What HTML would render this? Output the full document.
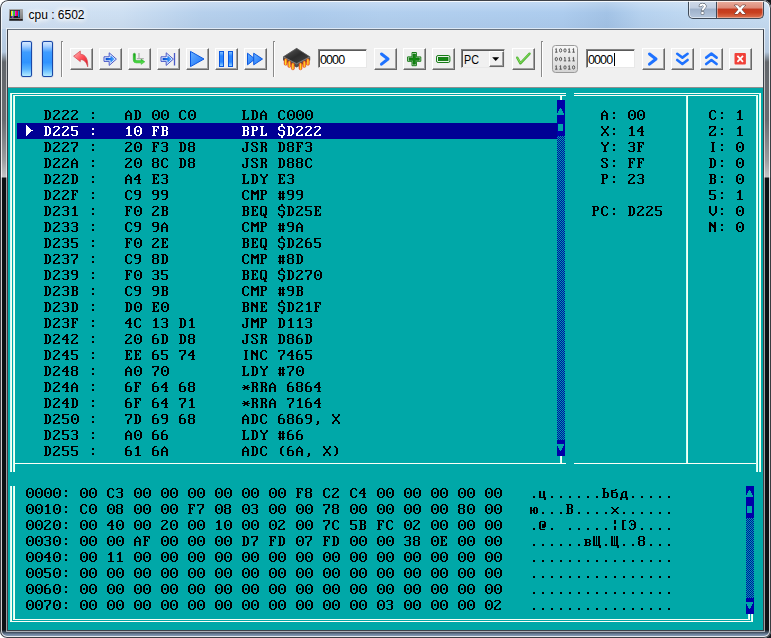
<!DOCTYPE html>
<html><head><meta charset="utf-8"><title>cpu : 6502</title>
<style>
html,body{margin:0;padding:0}
body{width:771px;height:638px;position:relative;overflow:hidden;background:#fff;font-family:"Liberation Sans",sans-serif}
.r{position:absolute}
.t{position:absolute;margin:0;font-family:"Liberation Mono",monospace;font-weight:bold;font-size:15px;line-height:16px;height:16px;color:#000;white-space:pre;letter-spacing:0}
.hatch{background-color:#0000a8;background-image:conic-gradient(#00a8a8 25%,#0000a8 0 50%,#00a8a8 0 75%,#0000a8 0);background-size:2px 2px}
#corner{position:absolute;left:760px;top:0;width:11px;height:10px;background:#15181c}
#win{position:absolute;left:0;top:0;width:771px;height:638px;border-radius:8px 8px 7px 7px;overflow:hidden;
 background:linear-gradient(180deg,#c9dbee 0,#bfd3e9 18px,#bcd1e8 30px,#b4c8de 52px,#63676c 62px,#686b70 120px,#9a9c9f 160px,#c4c5c7 177px,#0c1014 178px,#0c1014 630px,#2c3644 631px,#3a4656 632px,#506074 633px,#6a7e98 634px,#8096b0 635.5px,#8096b0 638px)}
#win:before{content:"";position:absolute;left:0;top:0;right:0;bottom:0;border-radius:8px 8px 7px 7px;box-shadow:inset 0 0 0 1px rgba(30,34,40,.85),inset 0 0 0 2px rgba(255,255,255,.8);z-index:5;pointer-events:none}
#inner{position:absolute;left:6px;top:28px;width:759px;height:604px;box-sizing:border-box;border:1px solid rgba(255,255,255,.6);}
#inner2{position:absolute;left:7px;top:29px;width:757px;height:602px;box-sizing:border-box;border:1px solid #3c4048;border-top-color:#6a7480}
#tool{position:absolute;left:8px;top:30px;width:755px;height:57px;background:#f0f0f0;border-bottom:1px solid #8f8f8f}
.btn{position:absolute;top:48px;width:21px;height:20px;background:#f0f0f0;border:1px solid;border-color:#fff #696969 #696969 #fff;border-width:1px 1px 1px 1px;box-shadow:inset -1px -1px 0 #a0a0a0;}
.sep{position:absolute;top:41px;width:1px;height:35px;background:#fff;border-left:1px solid #8a8a8a;border-top:1px solid #8a8a8a}
.inp{position:absolute;background:#fff;border:1px solid;border-color:#828282 #e8e8e8 #e8e8e8 #828282;box-shadow:inset 1px 1px 0 #5a5a5a;box-sizing:border-box;font-size:12.5px;line-height:21px;padding-left:1px;color:#000;letter-spacing:-0.9px;overflow:hidden}
.bar{position:absolute;top:41px;width:9px;height:34px;border:1px solid #1848a8;border-radius:2px;background:linear-gradient(180deg,#d4e8ff 0,#a8d0ff 12%,#3e9cff 30%,#2f93ff 60%,#5ab4ff 80%,#b4ecff 100%);box-shadow:0 0 1px #1848a8}
#title{position:absolute;left:28.5px;top:7px;font-size:12px;line-height:16px;color:#000;letter-spacing:0;text-shadow:0 0 6px #fff,0 0 6px #fff,0 0 4px #fff,0 0 8px #fff}
.cap{position:absolute;top:0;height:19px;box-sizing:border-box;border:1px solid #3f4a58;border-top:none}
</style></head><body>
<div id="corner"></div><div class="r" style="left:760px;top:628px;width:11px;height:10px;background:#15181c"></div>
<div id="win">
<div id="tb" class="r" style="left:2px;top:2px;width:767px;height:27px;background:linear-gradient(90deg,#d2e2f3 0,#cddff2 120px,#b6d0ec 200px,#adcbec 300px,#b2cfee 380px,#adccee 560px,#a3c3e6 605px,#b6d2ef 640px,#c2daf2 700px,#c6dcf1 767px)"></div><div class="r" style="left:2px;top:2px;width:767px;height:27px;background:linear-gradient(180deg,rgba(255,255,255,.25) 0,rgba(255,255,255,0) 40%,rgba(0,0,30,.03) 100%)"></div><div id="inner"></div><div id="inner2"></div>
<div id="title">cpu : 6502</div>
<!-- title icon -->
<svg class="r" style="left:9px;top:9px" width="15" height="12" viewBox="9 9 15 12">
<defs><linearGradient id="tvb" x1="0" y1="0" x2="0" y2="1"><stop offset="0" stop-color="#a8a8a8"/><stop offset="1" stop-color="#7c7c7c"/></linearGradient></defs>
<rect x="9" y="9.1" width="14" height="10" rx=".6" fill="url(#tvb)"/>
<rect x="10" y="10" width="10" height="8" fill="#2c2c30"/>
<rect x="11" y="10.8" width="1.1" height="5.4" fill="#ffe600"/><rect x="12.1" y="10.8" width="1.3" height="5.4" fill="#b8ecd8"/><rect x="13.4" y="10.8" width="1.5" height="5.4" fill="#2ce030"/><rect x="15" y="10.8" width="1.7" height="5.4" fill="#ff00e8"/><rect x="16.7" y="10.8" width="1.2" height="5.4" fill="#f01030"/><rect x="18.1" y="10.8" width="1.2" height="6.4" fill="#1088f0"/>
<rect x="11" y="16.2" width="1.1" height="1.2" fill="#2040c0"/><rect x="12.1" y="16.2" width="2" height="1.2" fill="#9030b0"/><rect x="12.3" y="16.8" width=".8" height=".7" fill="#f0d0f0"/><rect x="14.2" y="16.2" width="3.8" height="1.2" fill="#101010"/>
<rect x="9.2" y="19" width="13.7" height="1.7" rx=".5" fill="#181818"/><rect x="19" y="19.4" width="1.6" height=".8" fill="#802020"/>
</svg>
<!-- caption buttons -->
<div class="cap" style="left:688px;width:29px;border-radius:0 0 0 5px;background:linear-gradient(180deg,#d2dcea 0,#c0cde0 45%,#9db0c9 50%,#b6c7dd 100%);box-shadow:inset 1px 0 0 rgba(255,255,255,.6),inset 0 -1px 0 rgba(255,255,255,.5)"></div>
<div class="cap" style="left:716px;width:48px;border-radius:0 0 5px 0;background:linear-gradient(180deg,#ecb4a4 0,#dd8a78 45%,#c43a20 50%,#c8401f 70%,#dc7250 100%);box-shadow:inset 1px 0 0 rgba(255,255,255,.4),inset -1px -1px 0 rgba(255,255,255,.35)"></div>
<svg class="r" style="left:688px;top:0" width="76" height="20" viewBox="0 0 76 20">
<path d="M11.2 6.6 C11.2 4.2 12.6 3.4 14.6 3.4 C16.8 3.4 18 4.5 18 6.2 C18 8.4 15.6 8.6 15.6 10.6 L13.4 10.6 C13.4 8.4 15.6 8 15.6 6.5 C15.6 5.8 15.2 5.5 14.6 5.5 C13.9 5.5 13.5 5.9 13.5 6.6 Z M13.3 11.8 h2.4 v2.4 h-2.4 Z" fill="#fff" stroke="#3a4450" stroke-width="1" paint-order="stroke"/>
<path d="M46.5 5.2 h3.2 l2.3 2.6 l2.3 -2.6 h3.2 l-3.9 4.3 l4 4.4 h-3.3 l-2.3 -2.7 l-2.3 2.7 h-3.3 l4 -4.4 Z" fill="#fff" stroke="#4a3030" stroke-width="1" paint-order="stroke"/>
</svg>
<div id="tool"></div>
<div class="bar" style="left:21px"></div><div class="bar" style="left:42px"></div>
<div class="sep" style="left:61px"></div><div class="sep" style="left:273px"></div><div class="sep" style="left:541px"></div>
<div class="btn" style="left:70px"></div><div class="btn" style="left:99px"></div><div class="btn" style="left:128px"></div><div class="btn" style="left:157px"></div><div class="btn" style="left:186px"></div><div class="btn" style="left:215px"></div><div class="btn" style="left:244px"></div>
<div class="btn" style="left:374px"></div><div class="btn" style="left:403px"></div><div class="btn" style="left:432px"></div><div class="btn" style="left:512px"></div>
<div class="btn" style="left:642px"></div><div class="btn" style="left:671px"></div><div class="btn" style="left:700px"></div><div class="btn" style="left:729px"></div>
<div class="inp" style="left:318px;top:49px;width:49px;height:19px">0000</div>
<div class="inp" style="left:586px;top:49px;width:49px;height:19px">0000</div>
<div class="r" style="left:614px;top:53px;width:1px;height:13px;background:#000"></div>
<!-- combo -->
<div class="inp" style="left:461px;top:49px;width:44px;height:19px;background:#f0f0f0;padding-left:2px;letter-spacing:0"><span style="display:inline-block;transform:scaleX(.86);transform-origin:0 0">PC</span></div>
<div class="r" style="left:489px;top:51px;width:13px;height:14px;background:#f0f0f0;border:1px solid;border-color:#fff #696969 #696969 #fff;box-shadow:inset -1px -1px 0 #a0a0a0"></div>
<!--ICONS_START--><svg class="r" style="left:0;top:30px" width="771" height="57" viewBox="0 30 771 57">
<defs>
<linearGradient id="gR" x1="0" y1="0" x2="1" y2="1"><stop offset="0" stop-color="#ffc0c0"/><stop offset=".5" stop-color="#ff5058"/><stop offset="1" stop-color="#d81020"/></linearGradient>
<linearGradient id="gB" x1="0" y1="0" x2="1" y2="0"><stop offset="0" stop-color="#0848c8"/><stop offset=".55" stop-color="#1e7cf0"/><stop offset="1" stop-color="#6ab8ff"/></linearGradient>
<linearGradient id="gG" x1="0" y1="0" x2="0" y2="1"><stop offset="0" stop-color="#18a018"/><stop offset=".6" stop-color="#30c830"/><stop offset="1" stop-color="#70e860"/></linearGradient>
<linearGradient id="gP" x1="0" y1="0" x2="1" y2="1"><stop offset="0" stop-color="#68b0ff"/><stop offset="1" stop-color="#1870f8"/></linearGradient>
<linearGradient id="gPa" x1="0" y1="0" x2="0" y2="1"><stop offset="0" stop-color="#8cc8ff"/><stop offset=".3" stop-color="#2a86ff"/><stop offset=".7" stop-color="#2a86ff"/><stop offset="1" stop-color="#9cdcff"/></linearGradient>
<linearGradient id="gC" x1="0" y1="0" x2="1" y2="1"><stop offset="0" stop-color="#5c5c5c"/><stop offset=".5" stop-color="#2c2c2c"/><stop offset="1" stop-color="#484848"/></linearGradient>
<linearGradient id="gPin" x1="0" y1="0" x2="1" y2="0"><stop offset="0" stop-color="#f05010"/><stop offset=".45" stop-color="#ffe030"/><stop offset="1" stop-color="#f07010"/></linearGradient>
<linearGradient id="gBin" x1="0" y1="0" x2="0" y2="1"><stop offset="0" stop-color="#f8f8f8"/><stop offset="1" stop-color="#d4d4d4"/></linearGradient>
<g id="arrR"><path d="M0 4.2 h5.2 v-4 l7.2 6.3 l-7.2 6.3 v-4 h-5.2 Z" fill="#e8f0ff" stroke="#4858c8" stroke-width="1"/><path d="M1.6 5.4 h4.9 v-2.6 l4.3 3.7 l-4.3 3.7 v-2.6 h-4.9 Z" fill="url(#gB)"/></g>
</defs>
<!-- undo red arrow -->
<path d="M73.6 56.2 L80.3 51 L80.3 54.2 C85.8 54.4 88.2 59.5 87.7 66.8 C86.4 62 84.2 59.6 80.3 59.5 L80.3 61.6 Z" fill="url(#gR)" stroke="#d04048" stroke-width=".7"/>
<!-- step blue arrow -->
<use href="#arrR" x="104" y="52.6"/>
<!-- green step over -->
<path d="M139 53 v5.6 M136.8 58.6 h7" stroke="#b0b0b0" stroke-width="1.2" fill="none"/>
<path d="M133.2 54.3 a1.15 1.15 0 0 1 2.3 0 v4.9 a1.4 1.4 0 0 0 1.4 1.4 h4.2 v-1.5 l3.8 2.7 l-3.8 2.7 v-1.5 h-4.7 a3.2 3.2 0 0 1 -3.2 -3.2 Z" fill="url(#gG)" stroke="#20a820" stroke-width=".4"/>
<!-- run to -->
<use href="#arrR" x="161" y="52.6"/>
<path d="M174.5 53 v12.4" stroke="#4858c8" stroke-width="1.3"/>
<!-- play -->
<path d="M190.5 51.4 L204 59 L190.5 66.6 Z" fill="url(#gP)" stroke="#0a58e0" stroke-width="1" stroke-linejoin="round"/>
<!-- pause -->
<rect x="219.5" y="51.5" width="4" height="15" fill="url(#gPa)" stroke="#0a58e0" stroke-width="1"/>
<rect x="228.5" y="51.5" width="4" height="15" fill="url(#gPa)" stroke="#0a58e0" stroke-width="1"/>
<!-- ff -->
<path d="M247.5 53.2 L255 59 L247.5 64.8 Z" fill="url(#gP)" stroke="#0a58e0" stroke-width="1" stroke-linejoin="round"/>
<path d="M253.7 53.2 L262.5 59 L253.7 64.8 Z" fill="url(#gP)" stroke="#0a58e0" stroke-width="1" stroke-linejoin="round"/>
<!-- chip -->
<g>
<path d="M283 56.8 L296.6 48 L310.2 56.8 L310.2 60.2 L296.6 67.4 L283 60.2 Z" fill="#505050"/>
<path d="M283.6 56.8 L296.6 48.4 L309.6 56.8 L296.6 63.6 Z" fill="url(#gC)" stroke="#6a6a6a" stroke-width=".6"/>
<path id="chiprim" d="M283.4 57 L296.6 63.9 L309.8 57" fill="none" stroke="#8c8c8c" stroke-width=".7"/><g stroke="#e03008" stroke-width=".5">
<rect x="284.2" y="58.8" width="3" height="6.5" rx="1.4" fill="url(#gPin)"/>
<rect x="287.8" y="61" width="3" height="6.5" rx="1.4" fill="url(#gPin)"/>
<rect x="291.4" y="63" width="3" height="6.8" rx="1.4" fill="url(#gPin)"/>
<rect x="299" y="63" width="3" height="6.8" rx="1.4" fill="url(#gPin)"/>
<rect x="302.8" y="61" width="3" height="6.5" rx="1.4" fill="url(#gPin)"/>
<rect x="306.4" y="58.8" width="3" height="6.5" rx="1.4" fill="url(#gPin)"/>
</g>
</g>
<!-- chevron > -->
<path d="M381.5 54 L388 59 L381.5 64.2" fill="none" stroke="#1e72ff" stroke-width="3" stroke-linecap="round" stroke-linejoin="round"/>
<!-- plus -->
<path d="M412 52.5 h4.4 v4.4 h4.4 v4.4 h-4.4 v4.4 h-4.4 v-4.4 h-4.4 v-4.4 h4.4 Z" fill="#e8f4e8" stroke="#157a15" stroke-width="1" stroke-linejoin="round"/>
<path d="M413 54 h2.4 v3.9 h3.9 v2.4 h-3.9 v3.9 h-2.4 v-3.9 h-3.9 v-2.4 h3.9 Z" fill="#128a12" stroke="#0c700c" stroke-width=".8"/>
<!-- minus -->
<rect x="436.5" y="55.5" width="13.4" height="7" rx="1.6" fill="#e8f4e8" stroke="#157a15" stroke-width="1"/>
<rect x="438.4" y="57.4" width="9.6" height="3.2" fill="#128a12" stroke="#0c700c" stroke-width=".8"/>
<!-- combo arrow -->
<path d="M492.2 57.3 h7 l-3.5 3.8 Z" fill="#000"/>
<!-- check -->
<path d="M517.2 57.6 L520.4 63.4 L529.6 53.6" fill="none" stroke="#50b434" stroke-width="2.3" stroke-linecap="round" stroke-linejoin="round"/><path d="M517.4 57.8 L520.4 63 L529.4 53.8" fill="none" stroke="#84de5c" stroke-width="1" stroke-linecap="round" stroke-linejoin="round"/>
<!-- binary icon -->
<rect x="552.5" y="45.5" width="25" height="27" rx="3" fill="url(#gBin)" stroke="#9a9a9a" stroke-width="1"/>
<g fill="none" stroke="#4a4a4a" stroke-width=".9"><path d="M556.3 48.6v3.6M555.1 52.2h2.4M555.3 49.4l1 -.8" /><ellipse cx="560.6" cy="50.4" rx="1.1" ry="1.7"/><ellipse cx="565.0" cy="50.4" rx="1.1" ry="1.7"/><path d="M569.3 48.6v3.6M568.1 52.2h2.4M568.3 49.4l1 -.8" /><path d="M573.6 48.6v3.6M572.4 52.2h2.4M572.6 49.4l1 -.8" /><ellipse cx="556.3" cy="59.1" rx="1.1" ry="1.7"/><ellipse cx="560.6" cy="59.1" rx="1.1" ry="1.7"/><path d="M565.0 57.3v3.6M563.8 60.9h2.4M564.0 58.1l1 -.8" /><path d="M569.3 57.3v3.6M568.1 60.9h2.4M568.3 58.1l1 -.8" /><path d="M573.6 57.3v3.6M572.4 60.9h2.4M572.6 58.1l1 -.8" /><path d="M556.3 65.6v3.6M555.1 69.2h2.4M555.3 66.4l1 -.8" /><path d="M560.6 65.6v3.6M559.4 69.2h2.4M559.6 66.4l1 -.8" /><ellipse cx="565.0" cy="67.4" rx="1.1" ry="1.7"/><path d="M569.3 65.6v3.6M568.1 69.2h2.4M568.3 66.4l1 -.8" /><ellipse cx="573.6" cy="67.4" rx="1.1" ry="1.7"/></g>
<!-- > -->
<path d="M649.5 54 L656 59 L649.5 64.2" fill="none" stroke="#1e72ff" stroke-width="3" stroke-linecap="round" stroke-linejoin="round"/>
<!-- double down -->
<path d="M677.2 53.8 L682.4 57.6 L687.6 53.8 M677.2 60 L682.4 64 L687.6 60" fill="none" stroke="#1e72ff" stroke-width="2.6" stroke-linecap="round" stroke-linejoin="round"/>
<!-- double up -->
<path d="M706.2 57.6 L711.4 53.6 L716.6 57.6 M706.2 64 L711.4 60 L716.6 64" fill="none" stroke="#1e72ff" stroke-width="2.6" stroke-linecap="round" stroke-linejoin="round"/>
<!-- red x -->
<rect x="734.5" y="53" width="11.4" height="11.6" rx="1" fill="#f04038"/>
<path d="M737.4 55.8 l5.6 6 M743 55.8 l-5.6 6" stroke="#fff" stroke-width="1.7"/>
</svg>
<!--ICONS_END-->
</div>
<div class="r" style="left:8px;top:88px;width:755px;height:542px;background:#00a8a8"></div>
<div class="r" style="left:10px;top:93px;width:556px;height:1px;background:#fdfff6"></div>
<div class="r" style="left:13px;top:95px;width:553px;height:1px;background:#fdfff6"></div>
<div class="r" style="left:574px;top:93px;width:187px;height:1px;background:#fdfff6"></div>
<div class="r" style="left:574px;top:95px;width:184px;height:1px;background:#fdfff6"></div>
<div class="r" style="left:10px;top:93px;width:2px;height:379px;background:linear-gradient(90deg,#c8ffff 50%,#ffffe8 50%)"></div>
<div class="r" style="left:13px;top:95px;width:2px;height:377px;background:linear-gradient(90deg,#c8ffff 50%,#ffffe8 50%)"></div>
<div class="r" style="left:756px;top:95px;width:2px;height:377px;background:linear-gradient(90deg,#c8ffff 50%,#ffffe8 50%)"></div>
<div class="r" style="left:759px;top:93px;width:2px;height:379px;background:linear-gradient(90deg,#c8ffff 50%,#ffffe8 50%)"></div>
<div class="r" style="left:15px;top:463px;width:551px;height:1px;background:#fdfff6"></div>
<div class="r" style="left:574px;top:463px;width:182px;height:1px;background:#fdfff6"></div>
<div class="r" style="left:686px;top:96px;width:2px;height:367px;background:linear-gradient(90deg,#c8ffff 50%,#ffffe8 50%)"></div>
<div class="r" style="left:560px;top:96px;width:2px;height:8px;background:linear-gradient(90deg,#c8ffff 50%,#ffffe8 50%)"></div>
<div class="r" style="left:560px;top:456px;width:2px;height:7px;background:linear-gradient(90deg,#c8ffff 50%,#ffffe8 50%)"></div>
<div class="r" style="left:17px;top:123px;width:540px;height:16px;background:#000094"></div>
<div class="r" style="left:557px;top:100px;width:8px;height:356px;background:#0000a8"></div>
<div class="r hatch" style="left:557px;top:136px;width:8px;height:304px"></div>
<div class="r" style="left:560px;top:108px;width:1px;height:1px;background:#00a8a8"></div>
<div class="r" style="left:559px;top:109px;width:3px;height:1px;background:#00a8a8"></div>
<div class="r" style="left:559px;top:110px;width:3px;height:1px;background:#00a8a8"></div>
<div class="r" style="left:558px;top:111px;width:5px;height:1px;background:#00a8a8"></div>
<div class="r" style="left:558px;top:112px;width:5px;height:1px;background:#00a8a8"></div>
<div class="r" style="left:557px;top:113px;width:7px;height:1px;background:#00a8a8"></div>
<div class="r" style="left:557px;top:114px;width:7px;height:1px;background:#00a8a8"></div>
<div class="r" style="left:558px;top:124px;width:5px;height:7px;background:#00a8a8"></div>
<div class="r" style="left:557px;top:444px;width:7px;height:1px;background:#00a8a8"></div>
<div class="r" style="left:557px;top:445px;width:7px;height:1px;background:#00a8a8"></div>
<div class="r" style="left:558px;top:446px;width:5px;height:1px;background:#00a8a8"></div>
<div class="r" style="left:558px;top:447px;width:5px;height:1px;background:#00a8a8"></div>
<div class="r" style="left:559px;top:448px;width:3px;height:1px;background:#00a8a8"></div>
<div class="r" style="left:559px;top:449px;width:3px;height:1px;background:#00a8a8"></div>
<div class="r" style="left:560px;top:450px;width:1px;height:1px;background:#00a8a8"></div>
<div class="r" style="left:26px;top:125px;width:1px;height:1px;background:#fff"></div>
<div class="r" style="left:26px;top:126px;width:2px;height:1px;background:#fff"></div>
<div class="r" style="left:26px;top:127px;width:3px;height:1px;background:#fff"></div>
<div class="r" style="left:26px;top:128px;width:4px;height:1px;background:#fff"></div>
<div class="r" style="left:26px;top:129px;width:5px;height:1px;background:#fff"></div>
<div class="r" style="left:26px;top:130px;width:7px;height:1px;background:#fff"></div>
<div class="r" style="left:26px;top:131px;width:5px;height:1px;background:#fff"></div>
<div class="r" style="left:26px;top:132px;width:4px;height:1px;background:#fff"></div>
<div class="r" style="left:26px;top:133px;width:3px;height:1px;background:#fff"></div>
<div class="r" style="left:26px;top:134px;width:2px;height:1px;background:#fff"></div>
<div class="r" style="left:26px;top:135px;width:1px;height:1px;background:#fff"></div>
<div class="r" style="left:10px;top:486px;width:2px;height:136px;background:linear-gradient(90deg,#c8ffff 50%,#ffffe8 50%)"></div>
<div class="r" style="left:13px;top:486px;width:2px;height:134px;background:linear-gradient(90deg,#c8ffff 50%,#ffffe8 50%)"></div>
<div class="r" style="left:10px;top:621px;width:743px;height:1px;background:#fdfff6"></div>
<div class="r" style="left:13px;top:619px;width:737px;height:1px;background:#fdfff6"></div>
<div class="r" style="left:748px;top:614px;width:2px;height:6px;background:linear-gradient(90deg,#c8ffff 50%,#ffffe8 50%)"></div>
<div class="r" style="left:751px;top:614px;width:2px;height:8px;background:linear-gradient(90deg,#c8ffff 50%,#ffffe8 50%)"></div>
<div class="r" style="left:746px;top:486px;width:8px;height:128px;background:#0000a8"></div>
<div class="r hatch" style="left:746px;top:518px;width:8px;height:80px"></div>
<div class="r" style="left:749px;top:490px;width:1px;height:1px;background:#00a8a8"></div>
<div class="r" style="left:748px;top:491px;width:3px;height:1px;background:#00a8a8"></div>
<div class="r" style="left:748px;top:492px;width:3px;height:1px;background:#00a8a8"></div>
<div class="r" style="left:747px;top:493px;width:5px;height:1px;background:#00a8a8"></div>
<div class="r" style="left:747px;top:494px;width:5px;height:1px;background:#00a8a8"></div>
<div class="r" style="left:746px;top:495px;width:7px;height:1px;background:#00a8a8"></div>
<div class="r" style="left:746px;top:496px;width:7px;height:1px;background:#00a8a8"></div>
<div class="r" style="left:747px;top:506px;width:5px;height:7px;background:#00a8a8"></div>
<div class="r" style="left:746px;top:602px;width:7px;height:1px;background:#00a8a8"></div>
<div class="r" style="left:746px;top:603px;width:7px;height:1px;background:#00a8a8"></div>
<div class="r" style="left:747px;top:604px;width:5px;height:1px;background:#00a8a8"></div>
<div class="r" style="left:747px;top:605px;width:5px;height:1px;background:#00a8a8"></div>
<div class="r" style="left:748px;top:606px;width:3px;height:1px;background:#00a8a8"></div>
<div class="r" style="left:748px;top:607px;width:3px;height:1px;background:#00a8a8"></div>
<div class="r" style="left:749px;top:608px;width:1px;height:1px;background:#00a8a8"></div>
<svg class="r" style="left:0;top:0" width="771" height="638" viewBox="0 0 771 638" shape-rendering="crispEdges"><defs><path id="g23" d="M1 3h2v1h-2zM4 3h2v1h-2zM1 4h2v1h-2zM4 4h2v1h-2zM0 5h7v1h-7zM1 6h2v1h-2zM4 6h2v1h-2zM1 7h2v1h-2zM4 7h2v1h-2zM1 8h2v1h-2zM4 8h2v1h-2zM0 9h7v1h-7zM1 10h2v1h-2zM4 10h2v1h-2zM1 11h2v1h-2zM4 11h2v1h-2z"/><path id="g24" d="M3 0h2v1h-2zM3 1h2v1h-2zM1 2h5v1h-5zM0 3h2v1h-2zM5 3h2v1h-2zM0 4h2v1h-2zM6 4h1v1h-1zM0 5h2v1h-2zM1 6h5v1h-5zM5 7h2v1h-2zM5 8h2v1h-2zM0 9h1v1h-1zM5 9h2v1h-2zM0 10h2v1h-2zM5 10h2v1h-2zM1 11h5v1h-5zM3 12h2v1h-2zM3 13h2v1h-2z"/><path id="g28" d="M4 2h2v1h-2zM3 3h2v1h-2zM2 4h2v1h-2zM2 5h2v1h-2zM2 6h2v1h-2zM2 7h2v1h-2zM2 8h2v1h-2zM2 9h2v1h-2zM3 10h2v1h-2zM4 11h2v1h-2z"/><path id="g29" d="M2 2h2v1h-2zM3 3h2v1h-2zM4 4h2v1h-2zM4 5h2v1h-2zM4 6h2v1h-2zM4 7h2v1h-2zM4 8h2v1h-2zM4 9h2v1h-2zM3 10h2v1h-2zM2 11h2v1h-2z"/><path id="g2A" d="M1 5h2v1h-2zM5 5h2v1h-2zM2 6h4v1h-4zM0 7h8v1h-8zM2 8h4v1h-4zM1 9h2v1h-2zM5 9h2v1h-2z"/><path id="g2C" d="M3 9h2v1h-2zM3 10h2v1h-2zM3 11h2v1h-2zM2 12h2v1h-2z"/><path id="g2E" d="M3 10h2v1h-2zM3 11h2v1h-2z"/><path id="g30" d="M2 2h4v1h-4zM1 3h2v1h-2zM5 3h2v1h-2zM0 4h2v1h-2zM6 4h2v1h-2zM0 5h2v1h-2zM6 5h2v1h-2zM0 6h2v1h-2zM3 6h2v1h-2zM6 6h2v1h-2zM0 7h2v1h-2zM3 7h2v1h-2zM6 7h2v1h-2zM0 8h2v1h-2zM6 8h2v1h-2zM0 9h2v1h-2zM6 9h2v1h-2zM1 10h2v1h-2zM5 10h2v1h-2zM2 11h4v1h-4z"/><path id="g31" d="M3 2h2v1h-2zM2 3h3v1h-3zM1 4h4v1h-4zM3 5h2v1h-2zM3 6h2v1h-2zM3 7h2v1h-2zM3 8h2v1h-2zM3 9h2v1h-2zM3 10h2v1h-2zM1 11h6v1h-6z"/><path id="g32" d="M1 2h5v1h-5zM0 3h2v1h-2zM5 3h2v1h-2zM5 4h2v1h-2zM4 5h2v1h-2zM3 6h2v1h-2zM2 7h2v1h-2zM1 8h2v1h-2zM0 9h2v1h-2zM0 10h2v1h-2zM5 10h2v1h-2zM0 11h7v1h-7z"/><path id="g33" d="M1 2h5v1h-5zM0 3h2v1h-2zM5 3h2v1h-2zM5 4h2v1h-2zM5 5h2v1h-2zM2 6h4v1h-4zM5 7h2v1h-2zM5 8h2v1h-2zM5 9h2v1h-2zM0 10h2v1h-2zM5 10h2v1h-2zM1 11h5v1h-5z"/><path id="g34" d="M4 2h2v1h-2zM3 3h3v1h-3zM2 4h4v1h-4zM1 5h2v1h-2zM4 5h2v1h-2zM0 6h2v1h-2zM4 6h2v1h-2zM0 7h7v1h-7zM4 8h2v1h-2zM4 9h2v1h-2zM4 10h2v1h-2zM3 11h4v1h-4z"/><path id="g35" d="M0 2h7v1h-7zM0 3h2v1h-2zM0 4h2v1h-2zM0 5h2v1h-2zM0 6h6v1h-6zM5 7h2v1h-2zM5 8h2v1h-2zM5 9h2v1h-2zM0 10h2v1h-2zM5 10h2v1h-2zM1 11h5v1h-5z"/><path id="g36" d="M2 2h3v1h-3zM1 3h2v1h-2zM0 4h2v1h-2zM0 5h2v1h-2zM0 6h6v1h-6zM0 7h2v1h-2zM5 7h2v1h-2zM0 8h2v1h-2zM5 8h2v1h-2zM0 9h2v1h-2zM5 9h2v1h-2zM0 10h2v1h-2zM5 10h2v1h-2zM1 11h5v1h-5z"/><path id="g37" d="M0 2h7v1h-7zM0 3h2v1h-2zM5 3h2v1h-2zM5 4h2v1h-2zM5 5h2v1h-2zM4 6h2v1h-2zM3 7h2v1h-2zM2 8h2v1h-2zM2 9h2v1h-2zM2 10h2v1h-2zM2 11h2v1h-2z"/><path id="g38" d="M1 2h5v1h-5zM0 3h2v1h-2zM5 3h2v1h-2zM0 4h2v1h-2zM5 4h2v1h-2zM0 5h2v1h-2zM5 5h2v1h-2zM1 6h5v1h-5zM0 7h2v1h-2zM5 7h2v1h-2zM0 8h2v1h-2zM5 8h2v1h-2zM0 9h2v1h-2zM5 9h2v1h-2zM0 10h2v1h-2zM5 10h2v1h-2zM1 11h5v1h-5z"/><path id="g39" d="M1 2h5v1h-5zM0 3h2v1h-2zM5 3h2v1h-2zM0 4h2v1h-2zM5 4h2v1h-2zM0 5h2v1h-2zM5 5h2v1h-2zM1 6h6v1h-6zM5 7h2v1h-2zM5 8h2v1h-2zM5 9h2v1h-2zM4 10h2v1h-2zM1 11h4v1h-4z"/><path id="g3A" d="M3 4h2v1h-2zM3 5h2v1h-2zM3 9h2v1h-2zM3 10h2v1h-2z"/><path id="g40" d="M1 3h5v1h-5zM0 4h2v1h-2zM5 4h2v1h-2zM0 5h2v1h-2zM5 5h2v1h-2zM0 6h2v1h-2zM3 6h4v1h-4zM0 7h2v1h-2zM3 7h4v1h-4zM0 8h2v1h-2zM3 8h4v1h-4zM0 9h2v1h-2zM3 9h3v1h-3zM0 10h2v1h-2zM1 11h5v1h-5z"/><path id="g41" d="M3 2h1v1h-1zM2 3h3v1h-3zM1 4h2v1h-2zM4 4h2v1h-2zM0 5h2v1h-2zM5 5h2v1h-2zM0 6h2v1h-2zM5 6h2v1h-2zM0 7h7v1h-7zM0 8h2v1h-2zM5 8h2v1h-2zM0 9h2v1h-2zM5 9h2v1h-2zM0 10h2v1h-2zM5 10h2v1h-2zM0 11h2v1h-2zM5 11h2v1h-2z"/><path id="g42" d="M0 2h6v1h-6zM1 3h2v1h-2zM5 3h2v1h-2zM1 4h2v1h-2zM5 4h2v1h-2zM1 5h2v1h-2zM5 5h2v1h-2zM1 6h5v1h-5zM1 7h2v1h-2zM5 7h2v1h-2zM1 8h2v1h-2zM5 8h2v1h-2zM1 9h2v1h-2zM5 9h2v1h-2zM1 10h2v1h-2zM5 10h2v1h-2zM0 11h6v1h-6z"/><path id="g43" d="M2 2h4v1h-4zM1 3h2v1h-2zM5 3h2v1h-2zM0 4h2v1h-2zM6 4h1v1h-1zM0 5h2v1h-2zM0 6h2v1h-2zM0 7h2v1h-2zM0 8h2v1h-2zM0 9h2v1h-2zM6 9h1v1h-1zM1 10h2v1h-2zM5 10h2v1h-2zM2 11h4v1h-4z"/><path id="g44" d="M0 2h5v1h-5zM1 3h2v1h-2zM4 3h2v1h-2zM1 4h2v1h-2zM5 4h2v1h-2zM1 5h2v1h-2zM5 5h2v1h-2zM1 6h2v1h-2zM5 6h2v1h-2zM1 7h2v1h-2zM5 7h2v1h-2zM1 8h2v1h-2zM5 8h2v1h-2zM1 9h2v1h-2zM5 9h2v1h-2zM1 10h2v1h-2zM4 10h2v1h-2zM0 11h5v1h-5z"/><path id="g45" d="M0 2h7v1h-7zM1 3h2v1h-2zM5 3h2v1h-2zM1 4h2v1h-2zM6 4h1v1h-1zM1 5h2v1h-2zM4 5h1v1h-1zM1 6h4v1h-4zM1 7h2v1h-2zM4 7h1v1h-1zM1 8h2v1h-2zM1 9h2v1h-2zM6 9h1v1h-1zM1 10h2v1h-2zM5 10h2v1h-2zM0 11h7v1h-7z"/><path id="g46" d="M0 2h7v1h-7zM1 3h2v1h-2zM5 3h2v1h-2zM1 4h2v1h-2zM6 4h1v1h-1zM1 5h2v1h-2zM4 5h1v1h-1zM1 6h4v1h-4zM1 7h2v1h-2zM4 7h1v1h-1zM1 8h2v1h-2zM1 9h2v1h-2zM1 10h2v1h-2zM0 11h4v1h-4z"/><path id="g49" d="M2 2h4v1h-4zM3 3h2v1h-2zM3 4h2v1h-2zM3 5h2v1h-2zM3 6h2v1h-2zM3 7h2v1h-2zM3 8h2v1h-2zM3 9h2v1h-2zM3 10h2v1h-2zM2 11h4v1h-4z"/><path id="g4A" d="M3 2h4v1h-4zM4 3h2v1h-2zM4 4h2v1h-2zM4 5h2v1h-2zM4 6h2v1h-2zM4 7h2v1h-2zM0 8h2v1h-2zM4 8h2v1h-2zM0 9h2v1h-2zM4 9h2v1h-2zM0 10h2v1h-2zM4 10h2v1h-2zM1 11h4v1h-4z"/><path id="g4C" d="M0 2h4v1h-4zM1 3h2v1h-2zM1 4h2v1h-2zM1 5h2v1h-2zM1 6h2v1h-2zM1 7h2v1h-2zM1 8h2v1h-2zM1 9h2v1h-2zM6 9h1v1h-1zM1 10h2v1h-2zM5 10h2v1h-2zM0 11h7v1h-7z"/><path id="g4D" d="M0 2h2v1h-2zM6 2h2v1h-2zM0 3h3v1h-3zM5 3h3v1h-3zM0 4h8v1h-8zM0 5h8v1h-8zM0 6h2v1h-2zM3 6h2v1h-2zM6 6h2v1h-2zM0 7h2v1h-2zM6 7h2v1h-2zM0 8h2v1h-2zM6 8h2v1h-2zM0 9h2v1h-2zM6 9h2v1h-2zM0 10h2v1h-2zM6 10h2v1h-2zM0 11h2v1h-2zM6 11h2v1h-2z"/><path id="g4E" d="M0 2h2v1h-2zM5 2h2v1h-2zM0 3h3v1h-3zM5 3h2v1h-2zM0 4h4v1h-4zM5 4h2v1h-2zM0 5h7v1h-7zM0 6h2v1h-2zM3 6h4v1h-4zM0 7h2v1h-2zM4 7h3v1h-3zM0 8h2v1h-2zM5 8h2v1h-2zM0 9h2v1h-2zM5 9h2v1h-2zM0 10h2v1h-2zM5 10h2v1h-2zM0 11h2v1h-2zM5 11h2v1h-2z"/><path id="g50" d="M0 2h6v1h-6zM1 3h2v1h-2zM5 3h2v1h-2zM1 4h2v1h-2zM5 4h2v1h-2zM1 5h2v1h-2zM5 5h2v1h-2zM1 6h5v1h-5zM1 7h2v1h-2zM1 8h2v1h-2zM1 9h2v1h-2zM1 10h2v1h-2zM0 11h4v1h-4z"/><path id="g51" d="M1 2h5v1h-5zM0 3h2v1h-2zM5 3h2v1h-2zM0 4h2v1h-2zM5 4h2v1h-2zM0 5h2v1h-2zM5 5h2v1h-2zM0 6h2v1h-2zM5 6h2v1h-2zM0 7h2v1h-2zM5 7h2v1h-2zM0 8h2v1h-2zM5 8h2v1h-2zM0 9h2v1h-2zM3 9h1v1h-1zM5 9h2v1h-2zM0 10h2v1h-2zM3 10h4v1h-4zM1 11h5v1h-5zM4 12h2v1h-2zM4 13h3v1h-3z"/><path id="g52" d="M0 2h6v1h-6zM1 3h2v1h-2zM5 3h2v1h-2zM1 4h2v1h-2zM5 4h2v1h-2zM1 5h2v1h-2zM5 5h2v1h-2zM1 6h5v1h-5zM1 7h2v1h-2zM4 7h2v1h-2zM1 8h2v1h-2zM5 8h2v1h-2zM1 9h2v1h-2zM5 9h2v1h-2zM1 10h2v1h-2zM5 10h2v1h-2zM0 11h3v1h-3zM5 11h2v1h-2z"/><path id="g53" d="M1 2h5v1h-5zM0 3h2v1h-2zM5 3h2v1h-2zM0 4h2v1h-2zM5 4h2v1h-2zM1 5h2v1h-2zM2 6h3v1h-3zM4 7h2v1h-2zM5 8h2v1h-2zM0 9h2v1h-2zM5 9h2v1h-2zM0 10h2v1h-2zM5 10h2v1h-2zM1 11h5v1h-5z"/><path id="g56" d="M0 2h2v1h-2zM6 2h2v1h-2zM0 3h2v1h-2zM6 3h2v1h-2zM0 4h2v1h-2zM6 4h2v1h-2zM0 5h2v1h-2zM6 5h2v1h-2zM0 6h2v1h-2zM6 6h2v1h-2zM0 7h2v1h-2zM6 7h2v1h-2zM0 8h2v1h-2zM6 8h2v1h-2zM1 9h2v1h-2zM5 9h2v1h-2zM2 10h4v1h-4zM3 11h2v1h-2z"/><path id="g58" d="M0 2h2v1h-2zM6 2h2v1h-2zM0 3h2v1h-2zM6 3h2v1h-2zM1 4h2v1h-2zM5 4h2v1h-2zM2 5h4v1h-4zM3 6h2v1h-2zM3 7h2v1h-2zM2 8h4v1h-4zM1 9h2v1h-2zM5 9h2v1h-2zM0 10h2v1h-2zM6 10h2v1h-2zM0 11h2v1h-2zM6 11h2v1h-2z"/><path id="g59" d="M0 2h2v1h-2zM6 2h2v1h-2zM0 3h2v1h-2zM6 3h2v1h-2zM1 4h2v1h-2zM5 4h2v1h-2zM2 5h4v1h-4zM3 6h2v1h-2zM3 7h2v1h-2zM3 8h2v1h-2zM3 9h2v1h-2zM3 10h2v1h-2zM2 11h4v1h-4z"/><path id="g5A" d="M0 2h7v1h-7zM0 3h2v1h-2zM5 3h2v1h-2zM0 4h1v1h-1zM5 4h2v1h-2zM4 5h2v1h-2zM3 6h2v1h-2zM2 7h2v1h-2zM1 8h2v1h-2zM0 9h2v1h-2zM6 9h1v1h-1zM0 10h2v1h-2zM5 10h2v1h-2zM0 11h7v1h-7z"/><path id="g5B" d="M2 2h4v1h-4zM2 3h2v1h-2zM2 4h2v1h-2zM2 5h2v1h-2zM2 6h2v1h-2zM2 7h2v1h-2zM2 8h2v1h-2zM2 9h2v1h-2zM2 10h2v1h-2zM2 11h4v1h-4z"/><path id="gA6" d="M3 2h2v1h-2zM3 3h2v1h-2zM3 4h2v1h-2zM3 5h2v1h-2zM3 8h2v1h-2zM3 9h2v1h-2zM3 10h2v1h-2zM3 11h2v1h-2z"/><path id="g412" d="M0 2h6v1h-6zM1 3h2v1h-2zM5 3h2v1h-2zM1 4h2v1h-2zM5 4h2v1h-2zM1 5h2v1h-2zM5 5h2v1h-2zM1 6h5v1h-5zM1 7h2v1h-2zM5 7h2v1h-2zM1 8h2v1h-2zM5 8h2v1h-2zM1 9h2v1h-2zM5 9h2v1h-2zM1 10h2v1h-2zM5 10h2v1h-2zM0 11h6v1h-6z"/><path id="g429" d="M0 2h2v1h-2zM3 2h1v1h-1zM5 2h2v1h-2zM0 3h2v1h-2zM3 3h1v1h-1zM5 3h2v1h-2zM0 4h2v1h-2zM3 4h1v1h-1zM5 4h2v1h-2zM0 5h2v1h-2zM3 5h1v1h-1zM5 5h2v1h-2zM0 6h2v1h-2zM3 6h1v1h-1zM5 6h2v1h-2zM0 7h2v1h-2zM3 7h1v1h-1zM5 7h2v1h-2zM0 8h2v1h-2zM3 8h1v1h-1zM5 8h2v1h-2zM0 9h2v1h-2zM3 9h1v1h-1zM5 9h2v1h-2zM0 10h2v1h-2zM3 10h1v1h-1zM5 10h2v1h-2zM0 11h8v1h-8zM6 12h2v1h-2zM6 13h2v1h-2z"/><path id="g42C" d="M0 2h4v1h-4zM1 3h2v1h-2zM1 4h2v1h-2zM1 5h2v1h-2zM1 6h5v1h-5zM1 7h2v1h-2zM5 7h2v1h-2zM1 8h2v1h-2zM5 8h2v1h-2zM1 9h2v1h-2zM5 9h2v1h-2zM1 10h2v1h-2zM5 10h2v1h-2zM0 11h6v1h-6z"/><path id="g42D" d="M1 2h4v1h-4zM0 3h2v1h-2zM4 3h2v1h-2zM0 4h1v1h-1zM5 4h2v1h-2zM2 5h1v1h-1zM5 5h2v1h-2zM2 6h5v1h-5zM2 7h1v1h-1zM5 7h2v1h-2zM5 8h2v1h-2zM0 9h1v1h-1zM5 9h2v1h-2zM0 10h2v1h-2zM4 10h2v1h-2zM1 11h4v1h-4z"/><path id="g431" d="M4 3h2v1h-2zM0 4h5v1h-5zM0 5h2v1h-2zM0 6h6v1h-6zM0 7h2v1h-2zM5 7h2v1h-2zM0 8h2v1h-2zM5 8h2v1h-2zM0 9h2v1h-2zM5 9h2v1h-2zM0 10h2v1h-2zM5 10h2v1h-2zM1 11h5v1h-5z"/><path id="g432" d="M0 5h6v1h-6zM1 6h2v1h-2zM5 6h2v1h-2zM1 7h2v1h-2zM5 7h2v1h-2zM1 8h5v1h-5zM1 9h2v1h-2zM5 9h2v1h-2zM1 10h2v1h-2zM5 10h2v1h-2zM0 11h6v1h-6z"/><path id="g434" d="M3 5h4v1h-4zM2 6h2v1h-2zM5 6h2v1h-2zM1 7h2v1h-2zM5 7h2v1h-2zM1 8h2v1h-2zM5 8h2v1h-2zM1 9h2v1h-2zM5 9h2v1h-2zM1 10h2v1h-2zM5 10h2v1h-2zM0 11h8v1h-8zM0 12h2v1h-2zM6 12h2v1h-2zM0 13h2v1h-2zM6 13h2v1h-2z"/><path id="g445" d="M0 5h2v1h-2zM6 5h2v1h-2zM1 6h2v1h-2zM5 6h2v1h-2zM2 7h4v1h-4zM3 8h2v1h-2zM2 9h4v1h-4zM1 10h2v1h-2zM5 10h2v1h-2zM0 11h2v1h-2zM6 11h2v1h-2z"/><path id="g446" d="M0 5h2v1h-2zM4 5h2v1h-2zM0 6h2v1h-2zM4 6h2v1h-2zM0 7h2v1h-2zM4 7h2v1h-2zM0 8h2v1h-2zM4 8h2v1h-2zM0 9h2v1h-2zM4 9h2v1h-2zM0 10h2v1h-2zM4 10h2v1h-2zM0 11h7v1h-7zM5 12h2v1h-2zM5 13h2v1h-2z"/><path id="g44E" d="M0 5h2v1h-2zM4 5h3v1h-3zM0 6h2v1h-2zM3 6h2v1h-2zM6 6h2v1h-2zM0 7h2v1h-2zM3 7h2v1h-2zM6 7h2v1h-2zM0 8h5v1h-5zM6 8h2v1h-2zM0 9h2v1h-2zM3 9h2v1h-2zM6 9h2v1h-2zM0 10h2v1h-2zM3 10h2v1h-2zM6 10h2v1h-2zM0 11h2v1h-2zM4 11h3v1h-3z"/></defs><g fill="#000"><use href="#g44" x="44" y="108"/><use href="#g32" x="53" y="108"/><use href="#g32" x="62" y="108"/><use href="#g32" x="71" y="108"/><use href="#g3A" x="89" y="108"/><use href="#g41" x="125" y="108"/><use href="#g44" x="134" y="108"/><use href="#g30" x="152" y="108"/><use href="#g30" x="161" y="108"/><use href="#g43" x="179" y="108"/><use href="#g30" x="188" y="108"/><use href="#g4C" x="242" y="108"/><use href="#g44" x="251" y="108"/><use href="#g41" x="260" y="108"/><use href="#g43" x="278" y="108"/><use href="#g30" x="287" y="108"/><use href="#g30" x="296" y="108"/><use href="#g30" x="305" y="108"/><use href="#g44" x="44" y="140"/><use href="#g32" x="53" y="140"/><use href="#g32" x="62" y="140"/><use href="#g37" x="71" y="140"/><use href="#g3A" x="89" y="140"/><use href="#g32" x="125" y="140"/><use href="#g30" x="134" y="140"/><use href="#g46" x="152" y="140"/><use href="#g33" x="161" y="140"/><use href="#g44" x="179" y="140"/><use href="#g38" x="188" y="140"/><use href="#g4A" x="242" y="140"/><use href="#g53" x="251" y="140"/><use href="#g52" x="260" y="140"/><use href="#g44" x="278" y="140"/><use href="#g38" x="287" y="140"/><use href="#g46" x="296" y="140"/><use href="#g33" x="305" y="140"/><use href="#g44" x="44" y="156"/><use href="#g32" x="53" y="156"/><use href="#g32" x="62" y="156"/><use href="#g41" x="71" y="156"/><use href="#g3A" x="89" y="156"/><use href="#g32" x="125" y="156"/><use href="#g30" x="134" y="156"/><use href="#g38" x="152" y="156"/><use href="#g43" x="161" y="156"/><use href="#g44" x="179" y="156"/><use href="#g38" x="188" y="156"/><use href="#g4A" x="242" y="156"/><use href="#g53" x="251" y="156"/><use href="#g52" x="260" y="156"/><use href="#g44" x="278" y="156"/><use href="#g38" x="287" y="156"/><use href="#g38" x="296" y="156"/><use href="#g43" x="305" y="156"/><use href="#g44" x="44" y="172"/><use href="#g32" x="53" y="172"/><use href="#g32" x="62" y="172"/><use href="#g44" x="71" y="172"/><use href="#g3A" x="89" y="172"/><use href="#g41" x="125" y="172"/><use href="#g34" x="134" y="172"/><use href="#g45" x="152" y="172"/><use href="#g33" x="161" y="172"/><use href="#g4C" x="242" y="172"/><use href="#g44" x="251" y="172"/><use href="#g59" x="260" y="172"/><use href="#g45" x="278" y="172"/><use href="#g33" x="287" y="172"/><use href="#g44" x="44" y="188"/><use href="#g32" x="53" y="188"/><use href="#g32" x="62" y="188"/><use href="#g46" x="71" y="188"/><use href="#g3A" x="89" y="188"/><use href="#g43" x="125" y="188"/><use href="#g39" x="134" y="188"/><use href="#g39" x="152" y="188"/><use href="#g39" x="161" y="188"/><use href="#g43" x="242" y="188"/><use href="#g4D" x="251" y="188"/><use href="#g50" x="260" y="188"/><use href="#g23" x="278" y="188"/><use href="#g39" x="287" y="188"/><use href="#g39" x="296" y="188"/><use href="#g44" x="44" y="204"/><use href="#g32" x="53" y="204"/><use href="#g33" x="62" y="204"/><use href="#g31" x="71" y="204"/><use href="#g3A" x="89" y="204"/><use href="#g46" x="125" y="204"/><use href="#g30" x="134" y="204"/><use href="#g32" x="152" y="204"/><use href="#g42" x="161" y="204"/><use href="#g42" x="242" y="204"/><use href="#g45" x="251" y="204"/><use href="#g51" x="260" y="204"/><use href="#g24" x="278" y="204"/><use href="#g44" x="287" y="204"/><use href="#g32" x="296" y="204"/><use href="#g35" x="305" y="204"/><use href="#g45" x="314" y="204"/><use href="#g44" x="44" y="220"/><use href="#g32" x="53" y="220"/><use href="#g33" x="62" y="220"/><use href="#g33" x="71" y="220"/><use href="#g3A" x="89" y="220"/><use href="#g43" x="125" y="220"/><use href="#g39" x="134" y="220"/><use href="#g39" x="152" y="220"/><use href="#g41" x="161" y="220"/><use href="#g43" x="242" y="220"/><use href="#g4D" x="251" y="220"/><use href="#g50" x="260" y="220"/><use href="#g23" x="278" y="220"/><use href="#g39" x="287" y="220"/><use href="#g41" x="296" y="220"/><use href="#g44" x="44" y="236"/><use href="#g32" x="53" y="236"/><use href="#g33" x="62" y="236"/><use href="#g35" x="71" y="236"/><use href="#g3A" x="89" y="236"/><use href="#g46" x="125" y="236"/><use href="#g30" x="134" y="236"/><use href="#g32" x="152" y="236"/><use href="#g45" x="161" y="236"/><use href="#g42" x="242" y="236"/><use href="#g45" x="251" y="236"/><use href="#g51" x="260" y="236"/><use href="#g24" x="278" y="236"/><use href="#g44" x="287" y="236"/><use href="#g32" x="296" y="236"/><use href="#g36" x="305" y="236"/><use href="#g35" x="314" y="236"/><use href="#g44" x="44" y="252"/><use href="#g32" x="53" y="252"/><use href="#g33" x="62" y="252"/><use href="#g37" x="71" y="252"/><use href="#g3A" x="89" y="252"/><use href="#g43" x="125" y="252"/><use href="#g39" x="134" y="252"/><use href="#g38" x="152" y="252"/><use href="#g44" x="161" y="252"/><use href="#g43" x="242" y="252"/><use href="#g4D" x="251" y="252"/><use href="#g50" x="260" y="252"/><use href="#g23" x="278" y="252"/><use href="#g38" x="287" y="252"/><use href="#g44" x="296" y="252"/><use href="#g44" x="44" y="268"/><use href="#g32" x="53" y="268"/><use href="#g33" x="62" y="268"/><use href="#g39" x="71" y="268"/><use href="#g3A" x="89" y="268"/><use href="#g46" x="125" y="268"/><use href="#g30" x="134" y="268"/><use href="#g33" x="152" y="268"/><use href="#g35" x="161" y="268"/><use href="#g42" x="242" y="268"/><use href="#g45" x="251" y="268"/><use href="#g51" x="260" y="268"/><use href="#g24" x="278" y="268"/><use href="#g44" x="287" y="268"/><use href="#g32" x="296" y="268"/><use href="#g37" x="305" y="268"/><use href="#g30" x="314" y="268"/><use href="#g44" x="44" y="284"/><use href="#g32" x="53" y="284"/><use href="#g33" x="62" y="284"/><use href="#g42" x="71" y="284"/><use href="#g3A" x="89" y="284"/><use href="#g43" x="125" y="284"/><use href="#g39" x="134" y="284"/><use href="#g39" x="152" y="284"/><use href="#g42" x="161" y="284"/><use href="#g43" x="242" y="284"/><use href="#g4D" x="251" y="284"/><use href="#g50" x="260" y="284"/><use href="#g23" x="278" y="284"/><use href="#g39" x="287" y="284"/><use href="#g42" x="296" y="284"/><use href="#g44" x="44" y="300"/><use href="#g32" x="53" y="300"/><use href="#g33" x="62" y="300"/><use href="#g44" x="71" y="300"/><use href="#g3A" x="89" y="300"/><use href="#g44" x="125" y="300"/><use href="#g30" x="134" y="300"/><use href="#g45" x="152" y="300"/><use href="#g30" x="161" y="300"/><use href="#g42" x="242" y="300"/><use href="#g4E" x="251" y="300"/><use href="#g45" x="260" y="300"/><use href="#g24" x="278" y="300"/><use href="#g44" x="287" y="300"/><use href="#g32" x="296" y="300"/><use href="#g31" x="305" y="300"/><use href="#g46" x="314" y="300"/><use href="#g44" x="44" y="316"/><use href="#g32" x="53" y="316"/><use href="#g33" x="62" y="316"/><use href="#g46" x="71" y="316"/><use href="#g3A" x="89" y="316"/><use href="#g34" x="125" y="316"/><use href="#g43" x="134" y="316"/><use href="#g31" x="152" y="316"/><use href="#g33" x="161" y="316"/><use href="#g44" x="179" y="316"/><use href="#g31" x="188" y="316"/><use href="#g4A" x="242" y="316"/><use href="#g4D" x="251" y="316"/><use href="#g50" x="260" y="316"/><use href="#g44" x="278" y="316"/><use href="#g31" x="287" y="316"/><use href="#g31" x="296" y="316"/><use href="#g33" x="305" y="316"/><use href="#g44" x="44" y="332"/><use href="#g32" x="53" y="332"/><use href="#g34" x="62" y="332"/><use href="#g32" x="71" y="332"/><use href="#g3A" x="89" y="332"/><use href="#g32" x="125" y="332"/><use href="#g30" x="134" y="332"/><use href="#g36" x="152" y="332"/><use href="#g44" x="161" y="332"/><use href="#g44" x="179" y="332"/><use href="#g38" x="188" y="332"/><use href="#g4A" x="242" y="332"/><use href="#g53" x="251" y="332"/><use href="#g52" x="260" y="332"/><use href="#g44" x="278" y="332"/><use href="#g38" x="287" y="332"/><use href="#g36" x="296" y="332"/><use href="#g44" x="305" y="332"/><use href="#g44" x="44" y="348"/><use href="#g32" x="53" y="348"/><use href="#g34" x="62" y="348"/><use href="#g35" x="71" y="348"/><use href="#g3A" x="89" y="348"/><use href="#g45" x="125" y="348"/><use href="#g45" x="134" y="348"/><use href="#g36" x="152" y="348"/><use href="#g35" x="161" y="348"/><use href="#g37" x="179" y="348"/><use href="#g34" x="188" y="348"/><use href="#g49" x="242" y="348"/><use href="#g4E" x="251" y="348"/><use href="#g43" x="260" y="348"/><use href="#g37" x="278" y="348"/><use href="#g34" x="287" y="348"/><use href="#g36" x="296" y="348"/><use href="#g35" x="305" y="348"/><use href="#g44" x="44" y="364"/><use href="#g32" x="53" y="364"/><use href="#g34" x="62" y="364"/><use href="#g38" x="71" y="364"/><use href="#g3A" x="89" y="364"/><use href="#g41" x="125" y="364"/><use href="#g30" x="134" y="364"/><use href="#g37" x="152" y="364"/><use href="#g30" x="161" y="364"/><use href="#g4C" x="242" y="364"/><use href="#g44" x="251" y="364"/><use href="#g59" x="260" y="364"/><use href="#g23" x="278" y="364"/><use href="#g37" x="287" y="364"/><use href="#g30" x="296" y="364"/><use href="#g44" x="44" y="380"/><use href="#g32" x="53" y="380"/><use href="#g34" x="62" y="380"/><use href="#g41" x="71" y="380"/><use href="#g3A" x="89" y="380"/><use href="#g36" x="125" y="380"/><use href="#g46" x="134" y="380"/><use href="#g36" x="152" y="380"/><use href="#g34" x="161" y="380"/><use href="#g36" x="179" y="380"/><use href="#g38" x="188" y="380"/><use href="#g2A" x="242" y="380"/><use href="#g52" x="251" y="380"/><use href="#g52" x="260" y="380"/><use href="#g41" x="269" y="380"/><use href="#g36" x="287" y="380"/><use href="#g38" x="296" y="380"/><use href="#g36" x="305" y="380"/><use href="#g34" x="314" y="380"/><use href="#g44" x="44" y="396"/><use href="#g32" x="53" y="396"/><use href="#g34" x="62" y="396"/><use href="#g44" x="71" y="396"/><use href="#g3A" x="89" y="396"/><use href="#g36" x="125" y="396"/><use href="#g46" x="134" y="396"/><use href="#g36" x="152" y="396"/><use href="#g34" x="161" y="396"/><use href="#g37" x="179" y="396"/><use href="#g31" x="188" y="396"/><use href="#g2A" x="242" y="396"/><use href="#g52" x="251" y="396"/><use href="#g52" x="260" y="396"/><use href="#g41" x="269" y="396"/><use href="#g37" x="287" y="396"/><use href="#g31" x="296" y="396"/><use href="#g36" x="305" y="396"/><use href="#g34" x="314" y="396"/><use href="#g44" x="44" y="412"/><use href="#g32" x="53" y="412"/><use href="#g35" x="62" y="412"/><use href="#g30" x="71" y="412"/><use href="#g3A" x="89" y="412"/><use href="#g37" x="125" y="412"/><use href="#g44" x="134" y="412"/><use href="#g36" x="152" y="412"/><use href="#g39" x="161" y="412"/><use href="#g36" x="179" y="412"/><use href="#g38" x="188" y="412"/><use href="#g41" x="242" y="412"/><use href="#g44" x="251" y="412"/><use href="#g43" x="260" y="412"/><use href="#g36" x="278" y="412"/><use href="#g38" x="287" y="412"/><use href="#g36" x="296" y="412"/><use href="#g39" x="305" y="412"/><use href="#g2C" x="314" y="412"/><use href="#g58" x="332" y="412"/><use href="#g44" x="44" y="428"/><use href="#g32" x="53" y="428"/><use href="#g35" x="62" y="428"/><use href="#g33" x="71" y="428"/><use href="#g3A" x="89" y="428"/><use href="#g41" x="125" y="428"/><use href="#g30" x="134" y="428"/><use href="#g36" x="152" y="428"/><use href="#g36" x="161" y="428"/><use href="#g4C" x="242" y="428"/><use href="#g44" x="251" y="428"/><use href="#g59" x="260" y="428"/><use href="#g23" x="278" y="428"/><use href="#g36" x="287" y="428"/><use href="#g36" x="296" y="428"/><use href="#g44" x="44" y="444"/><use href="#g32" x="53" y="444"/><use href="#g35" x="62" y="444"/><use href="#g35" x="71" y="444"/><use href="#g3A" x="89" y="444"/><use href="#g36" x="125" y="444"/><use href="#g31" x="134" y="444"/><use href="#g36" x="152" y="444"/><use href="#g41" x="161" y="444"/><use href="#g41" x="242" y="444"/><use href="#g44" x="251" y="444"/><use href="#g43" x="260" y="444"/><use href="#g28" x="278" y="444"/><use href="#g36" x="287" y="444"/><use href="#g41" x="296" y="444"/><use href="#g2C" x="305" y="444"/><use href="#g58" x="323" y="444"/><use href="#g29" x="332" y="444"/><use href="#g41" x="601" y="108"/><use href="#g3A" x="610" y="108"/><use href="#g30" x="628" y="108"/><use href="#g30" x="637" y="108"/><use href="#g58" x="601" y="124"/><use href="#g3A" x="610" y="124"/><use href="#g31" x="628" y="124"/><use href="#g34" x="637" y="124"/><use href="#g59" x="601" y="140"/><use href="#g3A" x="610" y="140"/><use href="#g33" x="628" y="140"/><use href="#g46" x="637" y="140"/><use href="#g53" x="601" y="156"/><use href="#g3A" x="610" y="156"/><use href="#g46" x="628" y="156"/><use href="#g46" x="637" y="156"/><use href="#g50" x="601" y="172"/><use href="#g3A" x="610" y="172"/><use href="#g32" x="628" y="172"/><use href="#g33" x="637" y="172"/><use href="#g50" x="592" y="204"/><use href="#g43" x="601" y="204"/><use href="#g3A" x="610" y="204"/><use href="#g44" x="628" y="204"/><use href="#g32" x="637" y="204"/><use href="#g32" x="646" y="204"/><use href="#g35" x="655" y="204"/><use href="#g43" x="709" y="108"/><use href="#g3A" x="718" y="108"/><use href="#g31" x="736" y="108"/><use href="#g5A" x="709" y="124"/><use href="#g3A" x="718" y="124"/><use href="#g31" x="736" y="124"/><use href="#g49" x="709" y="140"/><use href="#g3A" x="718" y="140"/><use href="#g30" x="736" y="140"/><use href="#g44" x="709" y="156"/><use href="#g3A" x="718" y="156"/><use href="#g30" x="736" y="156"/><use href="#g42" x="709" y="172"/><use href="#g3A" x="718" y="172"/><use href="#g30" x="736" y="172"/><use href="#g35" x="709" y="188"/><use href="#g3A" x="718" y="188"/><use href="#g31" x="736" y="188"/><use href="#g56" x="709" y="204"/><use href="#g3A" x="718" y="204"/><use href="#g30" x="736" y="204"/><use href="#g4E" x="709" y="220"/><use href="#g3A" x="718" y="220"/><use href="#g30" x="736" y="220"/><use href="#g30" x="26" y="486"/><use href="#g30" x="35" y="486"/><use href="#g30" x="44" y="486"/><use href="#g30" x="53" y="486"/><use href="#g3A" x="62" y="486"/><use href="#g30" x="80" y="486"/><use href="#g30" x="89" y="486"/><use href="#g43" x="107" y="486"/><use href="#g33" x="116" y="486"/><use href="#g30" x="134" y="486"/><use href="#g30" x="143" y="486"/><use href="#g30" x="161" y="486"/><use href="#g30" x="170" y="486"/><use href="#g30" x="188" y="486"/><use href="#g30" x="197" y="486"/><use href="#g30" x="215" y="486"/><use href="#g30" x="224" y="486"/><use href="#g30" x="242" y="486"/><use href="#g30" x="251" y="486"/><use href="#g30" x="269" y="486"/><use href="#g30" x="278" y="486"/><use href="#g46" x="296" y="486"/><use href="#g38" x="305" y="486"/><use href="#g43" x="323" y="486"/><use href="#g32" x="332" y="486"/><use href="#g43" x="350" y="486"/><use href="#g34" x="359" y="486"/><use href="#g30" x="377" y="486"/><use href="#g30" x="386" y="486"/><use href="#g30" x="404" y="486"/><use href="#g30" x="413" y="486"/><use href="#g30" x="431" y="486"/><use href="#g30" x="440" y="486"/><use href="#g30" x="458" y="486"/><use href="#g30" x="467" y="486"/><use href="#g30" x="485" y="486"/><use href="#g30" x="494" y="486"/><use href="#g2E" x="530" y="486"/><use href="#g446" x="539" y="486"/><use href="#g2E" x="548" y="486"/><use href="#g2E" x="557" y="486"/><use href="#g2E" x="566" y="486"/><use href="#g2E" x="575" y="486"/><use href="#g2E" x="584" y="486"/><use href="#g2E" x="593" y="486"/><use href="#g42C" x="602" y="486"/><use href="#g431" x="611" y="486"/><use href="#g434" x="620" y="486"/><use href="#g2E" x="629" y="486"/><use href="#g2E" x="638" y="486"/><use href="#g2E" x="647" y="486"/><use href="#g2E" x="656" y="486"/><use href="#g2E" x="665" y="486"/><use href="#g30" x="26" y="502"/><use href="#g30" x="35" y="502"/><use href="#g31" x="44" y="502"/><use href="#g30" x="53" y="502"/><use href="#g3A" x="62" y="502"/><use href="#g43" x="80" y="502"/><use href="#g30" x="89" y="502"/><use href="#g30" x="107" y="502"/><use href="#g38" x="116" y="502"/><use href="#g30" x="134" y="502"/><use href="#g30" x="143" y="502"/><use href="#g30" x="161" y="502"/><use href="#g30" x="170" y="502"/><use href="#g46" x="188" y="502"/><use href="#g37" x="197" y="502"/><use href="#g30" x="215" y="502"/><use href="#g38" x="224" y="502"/><use href="#g30" x="242" y="502"/><use href="#g33" x="251" y="502"/><use href="#g30" x="269" y="502"/><use href="#g30" x="278" y="502"/><use href="#g30" x="296" y="502"/><use href="#g30" x="305" y="502"/><use href="#g37" x="323" y="502"/><use href="#g38" x="332" y="502"/><use href="#g30" x="350" y="502"/><use href="#g30" x="359" y="502"/><use href="#g30" x="377" y="502"/><use href="#g30" x="386" y="502"/><use href="#g30" x="404" y="502"/><use href="#g30" x="413" y="502"/><use href="#g30" x="431" y="502"/><use href="#g30" x="440" y="502"/><use href="#g38" x="458" y="502"/><use href="#g30" x="467" y="502"/><use href="#g30" x="485" y="502"/><use href="#g30" x="494" y="502"/><use href="#g44E" x="530" y="502"/><use href="#g2E" x="539" y="502"/><use href="#g2E" x="548" y="502"/><use href="#g2E" x="557" y="502"/><use href="#g412" x="566" y="502"/><use href="#g2E" x="575" y="502"/><use href="#g2E" x="584" y="502"/><use href="#g2E" x="593" y="502"/><use href="#g2E" x="602" y="502"/><use href="#g445" x="611" y="502"/><use href="#g2E" x="620" y="502"/><use href="#g2E" x="629" y="502"/><use href="#g2E" x="638" y="502"/><use href="#g2E" x="647" y="502"/><use href="#g2E" x="656" y="502"/><use href="#g2E" x="665" y="502"/><use href="#g30" x="26" y="518"/><use href="#g30" x="35" y="518"/><use href="#g32" x="44" y="518"/><use href="#g30" x="53" y="518"/><use href="#g3A" x="62" y="518"/><use href="#g30" x="80" y="518"/><use href="#g30" x="89" y="518"/><use href="#g34" x="107" y="518"/><use href="#g30" x="116" y="518"/><use href="#g30" x="134" y="518"/><use href="#g30" x="143" y="518"/><use href="#g32" x="161" y="518"/><use href="#g30" x="170" y="518"/><use href="#g30" x="188" y="518"/><use href="#g30" x="197" y="518"/><use href="#g31" x="215" y="518"/><use href="#g30" x="224" y="518"/><use href="#g30" x="242" y="518"/><use href="#g30" x="251" y="518"/><use href="#g30" x="269" y="518"/><use href="#g32" x="278" y="518"/><use href="#g30" x="296" y="518"/><use href="#g30" x="305" y="518"/><use href="#g37" x="323" y="518"/><use href="#g43" x="332" y="518"/><use href="#g35" x="350" y="518"/><use href="#g42" x="359" y="518"/><use href="#g46" x="377" y="518"/><use href="#g43" x="386" y="518"/><use href="#g30" x="404" y="518"/><use href="#g32" x="413" y="518"/><use href="#g30" x="431" y="518"/><use href="#g30" x="440" y="518"/><use href="#g30" x="458" y="518"/><use href="#g30" x="467" y="518"/><use href="#g30" x="485" y="518"/><use href="#g30" x="494" y="518"/><use href="#g2E" x="530" y="518"/><use href="#g40" x="539" y="518"/><use href="#g2E" x="548" y="518"/><use href="#g2E" x="566" y="518"/><use href="#g2E" x="575" y="518"/><use href="#g2E" x="584" y="518"/><use href="#g2E" x="593" y="518"/><use href="#g2E" x="602" y="518"/><use href="#gA6" x="611" y="518"/><use href="#g5B" x="620" y="518"/><use href="#g42D" x="629" y="518"/><use href="#g2E" x="638" y="518"/><use href="#g2E" x="647" y="518"/><use href="#g2E" x="656" y="518"/><use href="#g2E" x="665" y="518"/><use href="#g30" x="26" y="534"/><use href="#g30" x="35" y="534"/><use href="#g33" x="44" y="534"/><use href="#g30" x="53" y="534"/><use href="#g3A" x="62" y="534"/><use href="#g30" x="80" y="534"/><use href="#g30" x="89" y="534"/><use href="#g30" x="107" y="534"/><use href="#g30" x="116" y="534"/><use href="#g41" x="134" y="534"/><use href="#g46" x="143" y="534"/><use href="#g30" x="161" y="534"/><use href="#g30" x="170" y="534"/><use href="#g30" x="188" y="534"/><use href="#g30" x="197" y="534"/><use href="#g30" x="215" y="534"/><use href="#g30" x="224" y="534"/><use href="#g44" x="242" y="534"/><use href="#g37" x="251" y="534"/><use href="#g46" x="269" y="534"/><use href="#g44" x="278" y="534"/><use href="#g30" x="296" y="534"/><use href="#g37" x="305" y="534"/><use href="#g46" x="323" y="534"/><use href="#g44" x="332" y="534"/><use href="#g30" x="350" y="534"/><use href="#g30" x="359" y="534"/><use href="#g30" x="377" y="534"/><use href="#g30" x="386" y="534"/><use href="#g33" x="404" y="534"/><use href="#g38" x="413" y="534"/><use href="#g30" x="431" y="534"/><use href="#g45" x="440" y="534"/><use href="#g30" x="458" y="534"/><use href="#g30" x="467" y="534"/><use href="#g30" x="485" y="534"/><use href="#g30" x="494" y="534"/><use href="#g2E" x="530" y="534"/><use href="#g2E" x="539" y="534"/><use href="#g2E" x="548" y="534"/><use href="#g2E" x="557" y="534"/><use href="#g2E" x="566" y="534"/><use href="#g2E" x="575" y="534"/><use href="#g432" x="584" y="534"/><use href="#g429" x="593" y="534"/><use href="#g2E" x="602" y="534"/><use href="#g429" x="611" y="534"/><use href="#g2E" x="620" y="534"/><use href="#g2E" x="629" y="534"/><use href="#g38" x="638" y="534"/><use href="#g2E" x="647" y="534"/><use href="#g2E" x="656" y="534"/><use href="#g2E" x="665" y="534"/><use href="#g30" x="26" y="550"/><use href="#g30" x="35" y="550"/><use href="#g34" x="44" y="550"/><use href="#g30" x="53" y="550"/><use href="#g3A" x="62" y="550"/><use href="#g30" x="80" y="550"/><use href="#g30" x="89" y="550"/><use href="#g31" x="107" y="550"/><use href="#g31" x="116" y="550"/><use href="#g30" x="134" y="550"/><use href="#g30" x="143" y="550"/><use href="#g30" x="161" y="550"/><use href="#g30" x="170" y="550"/><use href="#g30" x="188" y="550"/><use href="#g30" x="197" y="550"/><use href="#g30" x="215" y="550"/><use href="#g30" x="224" y="550"/><use href="#g30" x="242" y="550"/><use href="#g30" x="251" y="550"/><use href="#g30" x="269" y="550"/><use href="#g30" x="278" y="550"/><use href="#g30" x="296" y="550"/><use href="#g30" x="305" y="550"/><use href="#g30" x="323" y="550"/><use href="#g30" x="332" y="550"/><use href="#g30" x="350" y="550"/><use href="#g30" x="359" y="550"/><use href="#g30" x="377" y="550"/><use href="#g30" x="386" y="550"/><use href="#g30" x="404" y="550"/><use href="#g30" x="413" y="550"/><use href="#g30" x="431" y="550"/><use href="#g30" x="440" y="550"/><use href="#g30" x="458" y="550"/><use href="#g30" x="467" y="550"/><use href="#g30" x="485" y="550"/><use href="#g30" x="494" y="550"/><use href="#g2E" x="530" y="550"/><use href="#g2E" x="539" y="550"/><use href="#g2E" x="548" y="550"/><use href="#g2E" x="557" y="550"/><use href="#g2E" x="566" y="550"/><use href="#g2E" x="575" y="550"/><use href="#g2E" x="584" y="550"/><use href="#g2E" x="593" y="550"/><use href="#g2E" x="602" y="550"/><use href="#g2E" x="611" y="550"/><use href="#g2E" x="620" y="550"/><use href="#g2E" x="629" y="550"/><use href="#g2E" x="638" y="550"/><use href="#g2E" x="647" y="550"/><use href="#g2E" x="656" y="550"/><use href="#g2E" x="665" y="550"/><use href="#g30" x="26" y="566"/><use href="#g30" x="35" y="566"/><use href="#g35" x="44" y="566"/><use href="#g30" x="53" y="566"/><use href="#g3A" x="62" y="566"/><use href="#g30" x="80" y="566"/><use href="#g30" x="89" y="566"/><use href="#g30" x="107" y="566"/><use href="#g30" x="116" y="566"/><use href="#g30" x="134" y="566"/><use href="#g30" x="143" y="566"/><use href="#g30" x="161" y="566"/><use href="#g30" x="170" y="566"/><use href="#g30" x="188" y="566"/><use href="#g30" x="197" y="566"/><use href="#g30" x="215" y="566"/><use href="#g30" x="224" y="566"/><use href="#g30" x="242" y="566"/><use href="#g30" x="251" y="566"/><use href="#g30" x="269" y="566"/><use href="#g30" x="278" y="566"/><use href="#g30" x="296" y="566"/><use href="#g30" x="305" y="566"/><use href="#g30" x="323" y="566"/><use href="#g30" x="332" y="566"/><use href="#g30" x="350" y="566"/><use href="#g30" x="359" y="566"/><use href="#g30" x="377" y="566"/><use href="#g30" x="386" y="566"/><use href="#g30" x="404" y="566"/><use href="#g30" x="413" y="566"/><use href="#g30" x="431" y="566"/><use href="#g30" x="440" y="566"/><use href="#g30" x="458" y="566"/><use href="#g30" x="467" y="566"/><use href="#g30" x="485" y="566"/><use href="#g30" x="494" y="566"/><use href="#g2E" x="530" y="566"/><use href="#g2E" x="539" y="566"/><use href="#g2E" x="548" y="566"/><use href="#g2E" x="557" y="566"/><use href="#g2E" x="566" y="566"/><use href="#g2E" x="575" y="566"/><use href="#g2E" x="584" y="566"/><use href="#g2E" x="593" y="566"/><use href="#g2E" x="602" y="566"/><use href="#g2E" x="611" y="566"/><use href="#g2E" x="620" y="566"/><use href="#g2E" x="629" y="566"/><use href="#g2E" x="638" y="566"/><use href="#g2E" x="647" y="566"/><use href="#g2E" x="656" y="566"/><use href="#g2E" x="665" y="566"/><use href="#g30" x="26" y="582"/><use href="#g30" x="35" y="582"/><use href="#g36" x="44" y="582"/><use href="#g30" x="53" y="582"/><use href="#g3A" x="62" y="582"/><use href="#g30" x="80" y="582"/><use href="#g30" x="89" y="582"/><use href="#g30" x="107" y="582"/><use href="#g30" x="116" y="582"/><use href="#g30" x="134" y="582"/><use href="#g30" x="143" y="582"/><use href="#g30" x="161" y="582"/><use href="#g30" x="170" y="582"/><use href="#g30" x="188" y="582"/><use href="#g30" x="197" y="582"/><use href="#g30" x="215" y="582"/><use href="#g30" x="224" y="582"/><use href="#g30" x="242" y="582"/><use href="#g30" x="251" y="582"/><use href="#g30" x="269" y="582"/><use href="#g30" x="278" y="582"/><use href="#g30" x="296" y="582"/><use href="#g30" x="305" y="582"/><use href="#g30" x="323" y="582"/><use href="#g30" x="332" y="582"/><use href="#g30" x="350" y="582"/><use href="#g30" x="359" y="582"/><use href="#g30" x="377" y="582"/><use href="#g30" x="386" y="582"/><use href="#g30" x="404" y="582"/><use href="#g30" x="413" y="582"/><use href="#g30" x="431" y="582"/><use href="#g30" x="440" y="582"/><use href="#g30" x="458" y="582"/><use href="#g30" x="467" y="582"/><use href="#g30" x="485" y="582"/><use href="#g30" x="494" y="582"/><use href="#g2E" x="530" y="582"/><use href="#g2E" x="539" y="582"/><use href="#g2E" x="548" y="582"/><use href="#g2E" x="557" y="582"/><use href="#g2E" x="566" y="582"/><use href="#g2E" x="575" y="582"/><use href="#g2E" x="584" y="582"/><use href="#g2E" x="593" y="582"/><use href="#g2E" x="602" y="582"/><use href="#g2E" x="611" y="582"/><use href="#g2E" x="620" y="582"/><use href="#g2E" x="629" y="582"/><use href="#g2E" x="638" y="582"/><use href="#g2E" x="647" y="582"/><use href="#g2E" x="656" y="582"/><use href="#g2E" x="665" y="582"/><use href="#g30" x="26" y="598"/><use href="#g30" x="35" y="598"/><use href="#g37" x="44" y="598"/><use href="#g30" x="53" y="598"/><use href="#g3A" x="62" y="598"/><use href="#g30" x="80" y="598"/><use href="#g30" x="89" y="598"/><use href="#g30" x="107" y="598"/><use href="#g30" x="116" y="598"/><use href="#g30" x="134" y="598"/><use href="#g30" x="143" y="598"/><use href="#g30" x="161" y="598"/><use href="#g30" x="170" y="598"/><use href="#g30" x="188" y="598"/><use href="#g30" x="197" y="598"/><use href="#g30" x="215" y="598"/><use href="#g30" x="224" y="598"/><use href="#g30" x="242" y="598"/><use href="#g30" x="251" y="598"/><use href="#g30" x="269" y="598"/><use href="#g30" x="278" y="598"/><use href="#g30" x="296" y="598"/><use href="#g30" x="305" y="598"/><use href="#g30" x="323" y="598"/><use href="#g30" x="332" y="598"/><use href="#g30" x="350" y="598"/><use href="#g30" x="359" y="598"/><use href="#g30" x="377" y="598"/><use href="#g33" x="386" y="598"/><use href="#g30" x="404" y="598"/><use href="#g30" x="413" y="598"/><use href="#g30" x="431" y="598"/><use href="#g30" x="440" y="598"/><use href="#g30" x="458" y="598"/><use href="#g30" x="467" y="598"/><use href="#g30" x="485" y="598"/><use href="#g32" x="494" y="598"/><use href="#g2E" x="530" y="598"/><use href="#g2E" x="539" y="598"/><use href="#g2E" x="548" y="598"/><use href="#g2E" x="557" y="598"/><use href="#g2E" x="566" y="598"/><use href="#g2E" x="575" y="598"/><use href="#g2E" x="584" y="598"/><use href="#g2E" x="593" y="598"/><use href="#g2E" x="602" y="598"/><use href="#g2E" x="611" y="598"/><use href="#g2E" x="620" y="598"/><use href="#g2E" x="629" y="598"/><use href="#g2E" x="638" y="598"/><use href="#g2E" x="647" y="598"/><use href="#g2E" x="656" y="598"/><use href="#g2E" x="665" y="598"/></g><g fill="#fff"><use href="#g44" x="44" y="124"/><use href="#g32" x="53" y="124"/><use href="#g32" x="62" y="124"/><use href="#g35" x="71" y="124"/><use href="#g3A" x="89" y="124"/><use href="#g31" x="125" y="124"/><use href="#g30" x="134" y="124"/><use href="#g46" x="152" y="124"/><use href="#g42" x="161" y="124"/><use href="#g42" x="242" y="124"/><use href="#g50" x="251" y="124"/><use href="#g4C" x="260" y="124"/><use href="#g24" x="278" y="124"/><use href="#g44" x="287" y="124"/><use href="#g32" x="296" y="124"/><use href="#g32" x="305" y="124"/><use href="#g32" x="314" y="124"/></g></svg>
</body></html>
